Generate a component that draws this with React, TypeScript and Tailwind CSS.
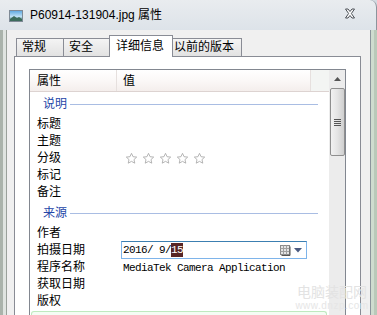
import React from "react";

const Star = () => (
  <svg width="13" height="13" viewBox="0 0 24 24">
    <path
      d="M12 2.5l2.9 6.2 6.7.7-5 4.6 1.4 6.6L12 17.3l-6 3.3 1.4-6.6-5-4.6 6.7-.7z"
      fill="#fff"
      stroke="#a9a9a9"
      strokeWidth="1.6"
      strokeLinejoin="round"
    />
  </svg>
);

const Row = ({ label, children }: { label: string; children?: React.ReactNode }) => (
  <div className="h-[17px] flex items-center">
    <div className="w-[87px] pl-[7px] leading-[17px] whitespace-nowrap">{label}</div>
    <div className="flex-1 flex items-center h-full">{children}</div>
  </div>
);

const Group = ({ label }: { label: string }) => (
  <div className="h-[24px] flex items-center pl-[13px]">
    <span className="text-[#2446a8] leading-[16px]">{label}</span>
    <div className="flex-1 h-px bg-[#a9bde3] ml-[3px] mr-[11px]" />
  </div>
);

export default function App() {
  return (
    <div className="w-[377px] h-[315px] overflow-hidden relative bg-[#d3dae1] text-[12px] text-black font-['Liberation_Sans','Noto_Sans_CJK_SC',sans-serif]">
      {/* Title bar */}
      <div className="h-[30px] flex items-center pl-[9px] bg-gradient-to-b from-[#e9ecef] to-[#dde3e9] rounded-tr-[7px] border-r border-[#8c949c]">
        <svg width="14" height="12" viewBox="0 0 14 12" className="mt-[1px]">
          <defs>
            <linearGradient id="sky" x1="0" y1="0" x2="0" y2="1">
              <stop offset="0" stopColor="#5aa6e0" />
              <stop offset="0.55" stopColor="#bfe0f5" />
              <stop offset="1" stopColor="#2f6e5a" />
            </linearGradient>
          </defs>
          <rect x="0.5" y="0.5" width="13" height="11" fill="url(#sky)" stroke="#7f8a96" />
          <path d="M1 9 L5 6 L8 8 L10 7 L13 9 L13 11 L1 11 Z" fill="#3c6c5c" />
        </svg>
        <span className="ml-[7px] text-[12px] leading-[14px] text-black">P60914-131904.jpg 属性</span>
        <div className="flex-1" />
        <svg width="12" height="11" viewBox="0 0 12 11" className="mr-[20px] mb-[4px]">
          <path
            d="M1.5 1 L4 1 L6 3.5 L8 1 L10.5 1 L7.4 5.5 L10.5 10 L8 10 L6 7.5 L4 10 L1.5 10 L4.6 5.5 Z"
            fill="#ffffff"
            stroke="#4a4f55"
            strokeWidth="1"
            strokeLinejoin="round"
          />
        </svg>
      </div>

      <div className="flex h-[285px]">
        {/* left frame */}
        <div className="w-[7px] flex">
          <div className="w-[3px] bg-[#aab3ab]" />
          <div className="w-[3px] bg-[#dfe4e0]" />
          <div className="w-[1px] bg-[#9aa19b]" />
        </div>

        {/* client */}
        <div className="w-[363px] bg-[#f0f0f0] pt-[5px] pl-[7px] pr-[9px] relative">
          {/* tabs */}
          <div className="h-[21px] flex items-end pl-[2px] relative z-10">
            <div className="w-[48px] h-[18px] border border-b-0 border-[#898c95] bg-gradient-to-b from-[#f4f4f4] to-[#e2e2e2] pl-[5px] leading-[17px]">常规</div>
            <div className="w-[47px] h-[18px] -ml-px border border-b-0 border-[#898c95] bg-gradient-to-b from-[#f4f4f4] to-[#e2e2e2] pl-[5px] leading-[17px]">安全</div>
            <div className="w-[64px] h-[22px] -ml-px -mb-px border border-b-0 border-[#898c95] bg-white pl-[6px] leading-[20px]">详细信息</div>
            <div className="w-[70px] h-[18px] -ml-px border border-b-0 border-[#898c95] bg-gradient-to-b from-[#f4f4f4] to-[#e2e2e2] pl-[1px] leading-[17px]">以前的版本</div>
          </div>

          {/* tab panel */}
          <div className="w-[347px] h-[270px] border border-[#898c95] bg-white pt-[12px] pl-[14px]">
            {/* list view */}
            <div className="w-[317px] h-[260px] border border-[#828790] flex">
              <div className="w-[299px] flex flex-col">
                {/* header */}
                <div className="h-[22px] flex bg-gradient-to-b from-[#ffffff] via-[#fbf8f7] to-[#f4eeec] border-b border-[#ddd3d1]">
                  <div className="w-[87px] pl-[7px] border-r border-[#e6e0de] leading-[22px]">属性</div>
                  <div className="w-[194px] pl-[6px] border-r border-[#e6e0de] leading-[22px]">值</div>
                  <div className="flex-1 bg-[#f3f5f3]" />
                </div>

                <Group label="说明" />
                <Row label="标题" />
                <Row label="主题" />
                <Row label="分级">
                  <div className="flex items-center gap-[4px] pl-[8px]">
                    <Star />
                    <Star />
                    <Star />
                    <Star />
                    <Star />
                  </div>
                </Row>
                <Row label="标记" />
                <Row label="备注" />

                <Group label="来源" />
                <Row label="作者" />
                <Row label="拍摄日期">
                  <div className="ml-[4px] w-[186px] h-[18px] -mt-[1px] border border-[#7eb4ea] border-t-[#3c7fb1] bg-white flex items-center pl-[1px] font-['Liberation_Mono',monospace] text-[11px] tracking-[-0.6px]">
                    <span className="leading-[14px]">2016/ 9/</span>
                    <span className="leading-[14px] bg-[#582525] text-white">15</span>
                    <div className="flex-1" />
                    <svg width="11" height="11" viewBox="0 0 11 11" className="mr-[3px]">
                      <rect x="0.5" y="0.5" width="9" height="9" fill="#e4e4e4" stroke="#8a8a8a" />
                      <path d="M0.5 3.5H9.5M0.5 6.5H9.5M3.5 0.5V9.5M6.5 0.5V9.5" stroke="#a0a0a0" strokeWidth="1" />
                      <path d="M10 1.5V10.5H1.5" stroke="#555" strokeWidth="1" fill="none" />
                    </svg>
                    <svg width="8" height="5" viewBox="0 0 8 5" className="mr-[4px]">
                      <path d="M0 0H8L4 4.5Z" fill="#4a5a80" />
                    </svg>
                  </div>
                </Row>
                <Row label="程序名称">
                  <span className="pl-[6px] font-['Liberation_Mono',monospace] text-[11px] tracking-[-0.6px] leading-[14px] whitespace-nowrap">
                    MediaTek Camera Application
                  </span>
                </Row>
                <Row label="获取日期" />
                <Row label="版权" />
                <div className="mt-[1px] ml-[1px] mr-[2px] h-[6px] border border-b-0 border-[#bfe9bf] rounded-t-[3px] bg-[#f4fcf4]" />
              </div>

              {/* scrollbar */}
              <div className="w-[16px] bg-[#ececec] flex flex-col items-center">
                <div className="h-[18px] flex items-center justify-center">
                  <svg width="7" height="4" viewBox="0 0 7 4">
                    <path d="M3.5 0L7 4H0Z" fill="#555" />
                  </svg>
                </div>
                <div className="w-[15px] h-[68px] border border-[#8f8f8f] rounded-[2px] bg-gradient-to-r from-[#f2f2f2] via-[#e4e4e4] to-[#cfcfcf] flex flex-col items-center justify-center gap-[1px]">
                  <div className="w-[7px] h-px bg-[#555]" />
                  <div className="w-[7px] h-px bg-[#555]" />
                  <div className="w-[7px] h-px bg-[#555]" />
                  <div className="w-[7px] h-px bg-[#555]" />
                </div>
              </div>
            </div>
          </div>

          {/* watermark */}
          <div className="absolute left-[288px] top-[254px] w-[74px] flex flex-col items-center pointer-events-none whitespace-nowrap">
            <span className="text-[14px] leading-[16px] text-[#e3e3e3]">电脑装配网</span>
            <span className="text-[10px] leading-[12px] text-[#e6e6e6] tracking-[0.5px]">www.dnzp.com</span>
          </div>
        </div>

        {/* right frame */}
        <div className="w-[7px] flex">
          <div className="w-[1px] bg-[#8c949c]" />
          <div className="w-[3px] bg-[#cfdccf]" />
          <div className="w-[3px] bg-[#b9c9b9]" />
        </div>
      </div>
    </div>
  );
}
